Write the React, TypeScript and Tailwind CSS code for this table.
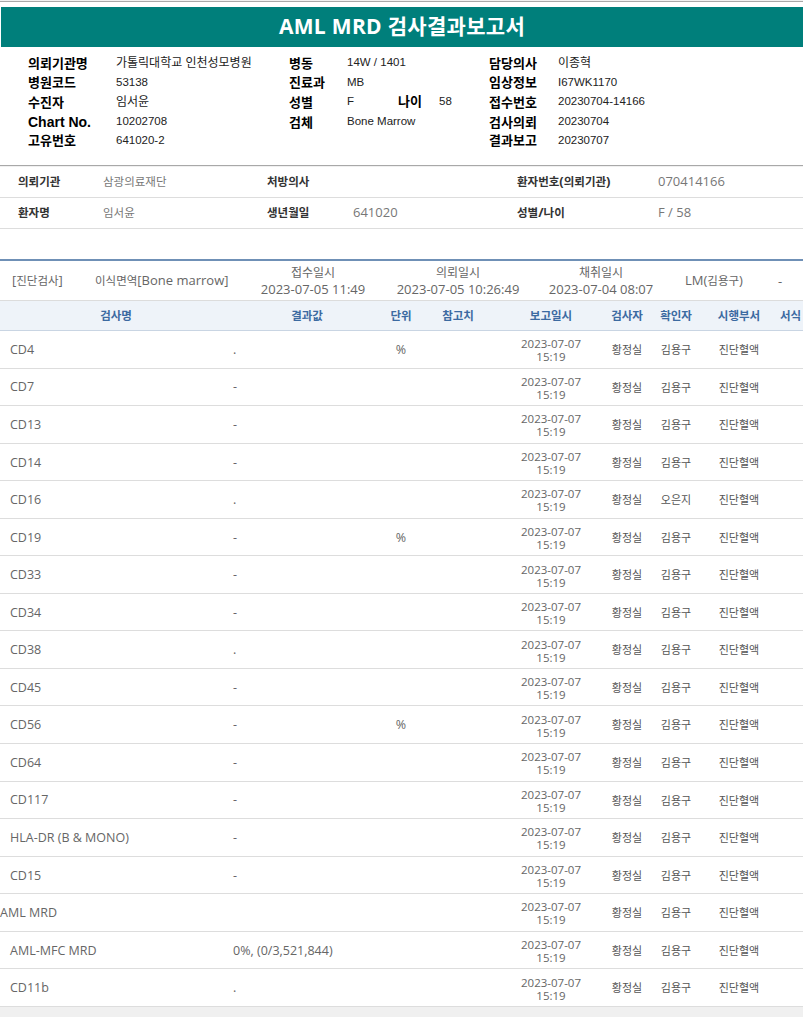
const KO = /([\u1100-\u11ff\u3130-\u318f\uac00-\ud7af]+)/;

function Mix({ text, ko }: { text: string; ko: string }) {
  return (
    <>
      {text.split(KO).map((p, i) =>
        i % 2 === 1 ? (
          <span key={i} className={ko}>
            {p}
          </span>
        ) : (
          p
        )
      )}
    </>
  );
}

const summary = [
  ["의뢰기관명", "가톨릭대학교 인천성모병원", "병동", "14W / 1401", "담당의사", "이종혁"],
  ["병원코드", "53138", "진료과", "MB", "임상정보", "I67WK1170"],
  ["수진자", "임서윤", "성별", "F", "접수번호", "20230704-14166"],
  ["Chart No.", "10202708", "검체", "Bone Marrow", "검사의뢰", "20230704"],
  ["고유번호", "641020-2", "", "", "결과보고", "20230707"],
];

const patient = [
  ["의뢰기관", "삼광의료재단", "처방의사", "", "환자번호(의뢰기관)", "070414166"],
  ["환자명", "임서윤", "생년월일", "641020", "성별/나이", "F / 58"],
];

const results = [
  { name: "CD4", value: ".", unit: "%" },
  { name: "CD7", value: "-" },
  { name: "CD13", value: "-" },
  { name: "CD14", value: "-" },
  { name: "CD16", value: ".", checker: "오은지" },
  { name: "CD19", value: "-", unit: "%" },
  { name: "CD33", value: "-" },
  { name: "CD34", value: "-" },
  { name: "CD38", value: "." },
  { name: "CD45", value: "-" },
  { name: "CD56", value: "-", unit: "%" },
  { name: "CD64", value: "-" },
  { name: "CD117", value: "-" },
  { name: "HLA-DR (B & MONO)", value: "-" },
  { name: "CD15", value: "-" },
  { name: "AML MRD", value: "", group: true },
  { name: "AML-MFC MRD", value: "0%, (0/3,521,844)" },
  { name: "CD11b", value: "." },
];

const cols = "grid grid-cols-[232px_150px_38px_76px_110px_42px_56px_70px_40px]";

function SummaryLabel({ text }: { text: string }) {
  return (
    <div className="flex items-center font-bold text-[14px] text-black">
      <span>
        <Mix text={text} ko="text-[13px]" />
      </span>
    </div>
  );
}

function SummaryValue({ text }: { text: string }) {
  return (
    <div className="flex items-center text-[11.5px] text-[#222]">
      <span>
        <Mix text={text} ko="text-[12px]" />
      </span>
    </div>
  );
}

export default function App() {
  return (
    <div className="min-h-screen w-[803px] overflow-hidden bg-[#f0f0f0] font-['Open_Sans','Noto_Sans_CJK_KR',sans-serif]">
      <section className="mt-px border-t border-[#a8a8a8] bg-white pt-[5px]">
        <div className="ml-px flex h-[40px] items-center justify-center bg-[#007f7b]">
          <h1 className="text-[21px] font-bold tracking-[0.3px] text-white">
            AML MRD <Mix text="검사결과보고서" ko="text-[21px]" />
          </h1>
        </div>
        <div className="grid h-[119px] grid-cols-[88px_173px_58px_142px_69px_1fr] grid-rows-[20px_19px_20px_20px_17px] border-b border-[#a8a8a8] pl-[28px] pt-[6px] font-['Liberation_Sans','Noto_Sans_CJK_KR',sans-serif]">
          {summary.map((r, i) => (
            <div key={i} className="contents">
              <SummaryLabel text={r[0]} />
              <SummaryValue text={r[1]} />
              <SummaryLabel text={r[2]} />
              {i === 2 ? (
                <div className="flex items-center text-[11.5px] text-[#222]">
                  <span className="w-[51px]">F</span>
                  <span className="w-[41px] text-[13px] font-bold text-black">나이</span>
                  <span>58</span>
                </div>
              ) : (
                <SummaryValue text={r[3]} />
              )}
              <SummaryLabel text={r[4]} />
              <SummaryValue text={r[5]} />
            </div>
          ))}
        </div>
      </section>

      <section className="mt-px bg-white">
        {patient.map((r, i) => (
          <div
            key={i}
            className="grid h-[31px] grid-cols-[85px_164px_86px_164px_141px_1fr] items-center border-b border-[#dddddd] pl-[18px] text-[13px]"
          >
            <div className="font-bold text-[#333]">
              <Mix text={r[0]} ko="text-[11.5px]" />
            </div>
            <div className="text-[#777]">
              <Mix text={r[1]} ko="text-[11.5px]" />
            </div>
            <div className="font-bold text-[#333]">
              <Mix text={r[2]} ko="text-[11.5px]" />
            </div>
            <div className="text-[#777]">{r[3]}</div>
            <div className="font-bold text-[#333]">
              <Mix text={r[4]} ko="text-[11.5px]" />
            </div>
            <div className="text-[#777]">{r[5]}</div>
          </div>
        ))}
        <div className="h-[30px]" />

        <div className="flex h-[42px] items-center border-t-2 border-b border-t-[#6f90b6] border-b-[#dcdcdc] text-[13px] leading-[16px] text-[#666]">
          <div className="w-[95px] pl-[12px]">
            <Mix text="[진단검사]" ko="text-[11.5px]" />
          </div>
          <div className="w-[155px]">
            <Mix text="이식면역[Bone marrow]" ko="text-[11.5px]" />
          </div>
          {[
            ["접수일시", "2023-07-05 11:49", "w-[126px]"],
            ["의뢰일시", "2023-07-05 10:26:49", "w-[164px]"],
            ["채취일시", "2023-07-04 08:07", "w-[122px]"],
          ].map(([t, d, w]) => (
            <div key={t} className={`${w} text-center`}>
              <div className="text-[12px]">{t}</div>
              <div>{d}</div>
            </div>
          ))}
          <div className="w-[116px] pl-[23px]">
            <Mix text="LM(김용구)" ko="text-[11.5px]" />
          </div>
          <div>-</div>
        </div>

        <div className={`${cols} h-[30px] items-center border-b border-[#c9d5e3] bg-[#eef3f9] text-center text-[11.5px] font-bold text-[#3c6aa1]`}>
          <div>검사명</div>
          <div>결과값</div>
          <div>단위</div>
          <div>참고치</div>
          <div>보고일시</div>
          <div>검사자</div>
          <div>확인자</div>
          <div>시행부서</div>
          <div className="text-left pl-[6px]">서식</div>
        </div>

        {results.map((r) => (
          <div
            key={r.name}
            className={`${cols} h-[37.55px] items-center border-b border-[#dddddd] pt-[2px] text-[12.5px] text-[#666]`}
          >
            <div className={r.group ? "pl-0" : "pl-[10px]"}>{r.name}</div>
            <div className="pl-px">{r.value}</div>
            <div className="text-center">{r.unit ?? ""}</div>
            <div />
            <div className="text-center text-[11.5px] leading-[13px]">
              <div>2023-07-07</div>
              <div>15:19</div>
            </div>
            <div className="text-center text-[11px] text-[#555]">황정실</div>
            <div className="text-center text-[11px] text-[#555]">{r.checker ?? "김용구"}</div>
            <div className="text-center text-[11px] text-[#555]">진단혈액</div>
            <div />
          </div>
        ))}
      </section>
    </div>
  );
}
